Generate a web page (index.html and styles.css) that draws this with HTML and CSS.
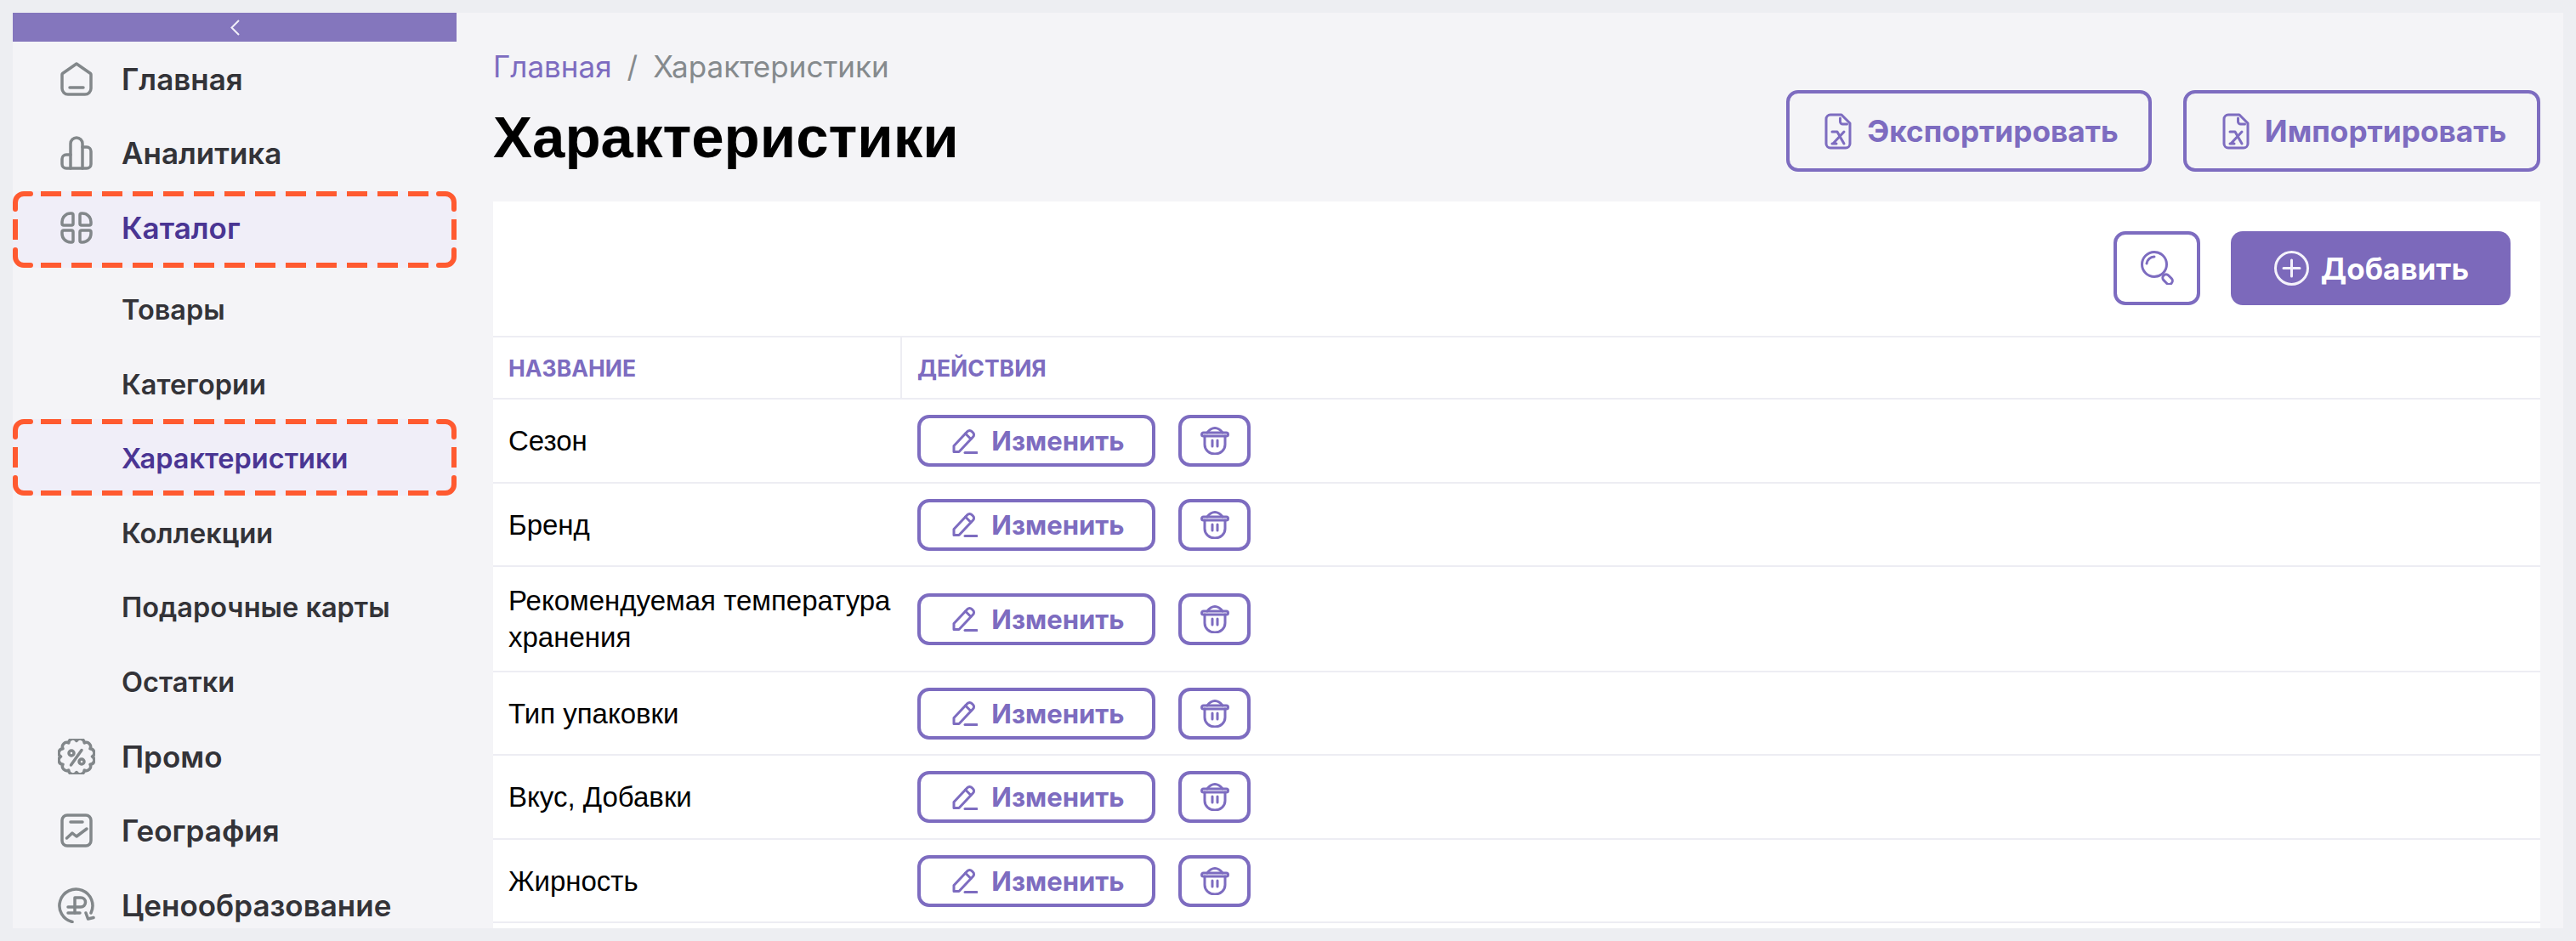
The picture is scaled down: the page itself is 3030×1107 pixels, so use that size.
FILE: index.html
```html
<!DOCTYPE html>
<html lang="ru">
<head>
<meta charset="utf-8">
<title>Характеристики</title>
<link rel="stylesheet" href="styles.css">
</head>
<body>
<svg class="defs" width="0" height="0" aria-hidden="true">
  <symbol id="i-home" viewBox="0 0 40 40"><path d="M20 2 36.500 13.500a2 2 0 0 1 .5 1.500V31a7 7 0 0 1-7 7H10a7 7 0 0 1-7-7V15a2 2 0 0 1 .5-1.500Z"/><path d="M12 30H28"/></symbol>
  <symbol id="i-chart" viewBox="0 0 40 40"><path d="M13 38H8a5 5 0 0 1-5-5V27a5 5 0 0 1 5-5h5"/><path d="M13 38V9a7 7 0 0 1 14 0V38Z"/><path d="M27 13h5a5 5 0 0 1 5 5V33a5 5 0 0 1-5 5h-5"/></symbol>
  <symbol id="i-grid" viewBox="0 0 40 40"><path d="M16 5V15a2 2 0 0 1-2 2H5a2 2 0 0 1-2-2V13A10 10 0 0 1 13 3h1a2 2 0 0 1 2 2Z"/><path d="M24 5V15a2 2 0 0 0 2 2H35a2 2 0 0 0 2-2V13A10 10 0 0 0 27 3H26a2 2 0 0 0-2 2Z"/><path d="M16 35V25a2 2 0 0 0-2-2H5a2 2 0 0 0-2 2V27A10 10 0 0 0 13 37h1a2 2 0 0 0 2-2Z"/><path d="M24 35V25a2 2 0 0 1 2-2H35a2 2 0 0 1 2 2V27A10 10 0 0 1 27 37H26a2 2 0 0 1-2-2Z"/></symbol>
  <symbol id="i-promo" viewBox="0 0 44 42"><path d="M40.500 21A5 5 0 0 1 38 30.250A5 5 0 0 1 31.250 37A5 5 0 0 1 22 39.500A5 5 0 0 1 12.750 37A5 5 0 0 1 6 30.250A5 5 0 0 1 3.500 21A5 5 0 0 1 6 11.750A5 5 0 0 1 12.750 5A5 5 0 0 1 22 2.500A5 5 0 0 1 31.250 5A5 5 0 0 1 38 11.750A5 5 0 0 1 40.500 21Z"/><path d="M28 13.500 15.500 31"/><circle cx="16" cy="17" r="3"/><circle cx="28" cy="27" r="3"/></symbol>
  <symbol id="i-geo" viewBox="0 0 40 40"><rect x="3" y="2" width="34" height="36" rx="6"/><path d="M13 10H27"/><path d="M8.500 29 15 23l5 4 12-9"/></symbol>
  <symbol id="i-rub" viewBox="0 0 44 42"><path d="M17 40.500A19.500 19.500 0 1 1 39 30"/><path d="M33 30l2.500 7 6.500-1.500"/><path d="M20 30V12h7a5.500 5.500 0 0 1 0 11H12"/><path d="M12 30H26"/></symbol>
  <symbol id="i-file" viewBox="0 0 32 43"><path d="M7 2H20L30 12V36a5 5 0 0 1-5 5H7a5 5 0 0 1-5-5V7A5 5 0 0 1 7 2Z"/><path d="M18.500 6v4a3 3 0 0 0 3 3h5"/><path d="M9 22H15L23 36M23 22 L10 36M9 36H14"/></symbol>
  <symbol id="i-search" viewBox="0 0 41 40"><circle cx="17" cy="16" r="14.500"/><path d="M8 15A9 9 0 0 1 17 7"/><rect x="-4" y="0" width="8" height="13" rx="4" transform="translate(28 29) rotate(-45)"/></symbol>
  <symbol id="i-plus" viewBox="0 0 41 41"><circle cx="20.500" cy="20.500" r="19"/><path d="M20.500 11V30M11 20.500H30"/></symbol>
  <symbol id="i-pen" viewBox="0 0 30 30"><path d="M2 20.500 18 3.500a3.500 3.500 0 0 1 5 0l1.500 1.500a3.500 3.500 0 0 1 0 5L8 27.500H2Z"/><path d="M15.500 6 22 12.500"/><path d="M15 28.500H29"/></symbol>
  <symbol id="i-trash" viewBox="0 0 34 33"><path d="M1.500 9a2 2 0 0 1 2-2h27a2 2 0 0 1 0 4H3.500a2 2 0 0 1-2-2Z"/><path d="M8 7c2-3 6-5.500 9-5.500S24 4 26 7"/><path d="M5 11V21a12 11 0 0 0 24 0V11"/><path d="M14 16v7M20 16v7"/></symbol>
  <symbol id="mark" viewBox="0 0 522 90">
    <rect class="mark-bg" x="0" y="0" width="522" height="90" rx="12"/>
    <path d="M3 21V13A10 10 0 0 1 13 3H21M501 3H509A10 10 0 0 1 519 13V21M519 69V77A10 10 0 0 1 509 87H501M21 87H13A10 10 0 0 1 3 77V69"/>
    <path class="dash" d="M33 3H489M33 87H489M3 33V57M519 33V57"/>
  </symbol>
</svg>

<div class="frame">
  <aside class="side">
    <button class="collapse" type="button" aria-label="Свернуть">
      <svg width="11" height="19" viewBox="0 0 11 19"><path d="M10 1 1.500 9.500 10 18"/></svg>
    </button>
    <nav class="nav">
      <a class="item"><svg class="ico"><use href="#i-home"/></svg>Главная</a>
      <a class="item"><svg class="ico"><use href="#i-chart"/></svg>Аналитика</a>
      <a class="item active"><svg class="ico"><use href="#i-grid"/></svg>Каталог<svg class="mark"><use href="#mark"/></svg></a>
      <div class="sub">
        <a class="item">Товары</a>
        <a class="item">Категории</a>
        <a class="item active">Характеристики<svg class="mark"><use href="#mark"/></svg></a>
        <a class="item">Коллекции</a>
        <a class="item">Подарочные карты</a>
        <a class="item">Остатки</a>
      </div>
      <a class="item"><svg class="ico wide"><use href="#i-promo"/></svg>Промо</a>
      <a class="item"><svg class="ico"><use href="#i-geo"/></svg>География</a>
      <a class="item"><svg class="ico wide"><use href="#i-rub"/></svg>Ценообразование</a>
    </nav>
  </aside>

  <main class="main">
    <div class="crumbs"><a class="crumb-link">Главная</a><span class="crumb-sep">/</span><span>Характеристики</span></div>
    <header class="head">
      <h1 class="title">Характеристики</h1>
      <div class="head-actions">
        <button class="btn btn-lg" type="button"><svg class="file"><use href="#i-file"/></svg>Экспортировать</button>
        <button class="btn btn-lg" type="button"><svg class="file"><use href="#i-file"/></svg>Импортировать</button>
      </div>
    </header>
    <section class="card">
      <div class="toolbar">
        <button class="btn btn-search" type="button" aria-label="Поиск"><svg class="search"><use href="#i-search"/></svg></button>
        <button class="btn btn-add" type="button"><svg class="plus"><use href="#i-plus"/></svg>Добавить</button>
      </div>
      <table class="table">
        <colgroup><col class="col-name"><col></colgroup>
        <thead><tr><th>Название</th><th>Действия</th></tr></thead>
        <tbody>
          <tr><td>Сезон</td><td><div class="acts"><button class="btn btn-edit" type="button"><svg class="pen"><use href="#i-pen"/></svg>Изменить</button><button class="btn btn-del" type="button" aria-label="Удалить"><svg class="trash"><use href="#i-trash"/></svg></button></div></td></tr>
          <tr><td>Бренд</td><td><div class="acts"><button class="btn btn-edit" type="button"><svg class="pen"><use href="#i-pen"/></svg>Изменить</button><button class="btn btn-del" type="button" aria-label="Удалить"><svg class="trash"><use href="#i-trash"/></svg></button></div></td></tr>
          <tr><td>Рекомендуемая температура хранения</td><td><div class="acts"><button class="btn btn-edit" type="button"><svg class="pen"><use href="#i-pen"/></svg>Изменить</button><button class="btn btn-del" type="button" aria-label="Удалить"><svg class="trash"><use href="#i-trash"/></svg></button></div></td></tr>
          <tr><td>Тип упаковки</td><td><div class="acts"><button class="btn btn-edit" type="button"><svg class="pen"><use href="#i-pen"/></svg>Изменить</button><button class="btn btn-del" type="button" aria-label="Удалить"><svg class="trash"><use href="#i-trash"/></svg></button></div></td></tr>
          <tr><td>Вкус, Добавки</td><td><div class="acts"><button class="btn btn-edit" type="button"><svg class="pen"><use href="#i-pen"/></svg>Изменить</button><button class="btn btn-del" type="button" aria-label="Удалить"><svg class="trash"><use href="#i-trash"/></svg></button></div></td></tr>
          <tr><td>Жирность</td><td><div class="acts"><button class="btn btn-edit" type="button"><svg class="pen"><use href="#i-pen"/></svg>Изменить</button><button class="btn btn-del" type="button" aria-label="Удалить"><svg class="trash"><use href="#i-trash"/></svg></button></div></td></tr>
        </tbody>
      </table>
    </section>
  </main>
</div>
</body>
</html>
```
FILE: styles.css
```css
* { box-sizing: border-box; }
html, body { height: 100%; }
body {
  margin: 0;
  padding: 15px;
  background: #edeef2;
  font-family: Inter, "Liberation Sans", sans-serif;
  color: #333338;
  overflow: hidden;
}
.defs { position: absolute; }
symbol path, symbol circle, symbol rect { fill: none; stroke-linecap: round; stroke-linejoin: round; }
symbol rect.mark-bg { fill: #f0eef8; stroke: none; }

.frame {
  display: flex;
  height: 100%;
  background: #f4f4f7;
  overflow: hidden;
}

/* sidebar */
.side { flex: 0 0 522px; display: flex; flex-direction: column; }
.collapse {
  flex: none;
  display: flex;
  align-items: center;
  justify-content: center;
  height: 34px;
  padding: 0;
  border: 0;
  background: #8476bd;
}
.collapse path { fill: none; stroke: #f1eff9; stroke-width: 2; }
.nav { flex: none; display: flex; flex-direction: column; }
.sub { display: flex; flex-direction: column; margin-top: 9.500px; }
.item {
  position: relative;
  isolation: isolate;
  flex: none;
  display: flex;
  align-items: center;
  height: 87.500px;
  padding-left: 128px;
  font-size: 35px;
  font-weight: 600;
  color: #333338;
}
.sub .item { font-size: 32.500px; }
.item.active { color: #4a3593; }
.ico {
  position: absolute;
  left: 55px;
  top: 50%;
  width: 40px;
  height: 40px;
  margin-top: -20px;
  fill: none;
  stroke: #82878a;
  stroke-width: 3.500;
}
.ico.wide { left: 53px; width: 44px; height: 42px; margin-top: -21px; }
.mark {
  position: absolute;
  z-index: -1;
  left: 0;
  top: 1px;
  width: 522px;
  height: 90px;
  fill: none;
  stroke: #ff5a30;
  stroke-width: 6;
  overflow: visible;
}
.sub .mark { top: -3px; }
.dash { stroke-dasharray: 24 12; stroke-linecap: butt; }

/* main */
.main { flex: 1; min-width: 0; padding: 43px 27px 0 43px; display: flex; flex-direction: column; }
.crumbs { display: flex; align-items: center; height: 40px; font-size: 35px; color: #858a8d; }
.crumb-link { color: #7d6cc0; }
.crumb-sep { margin: 0 18px; }
.head { display: flex; justify-content: space-between; margin-top: 8px; }
.title {
  margin: 16px 0 0 0;
  font-family: "Liberation Sans", Arial, sans-serif;
  font-size: 69px;
  line-height: 80px;
  font-weight: 700;
  color: #000;
}
.head-actions { display: flex; gap: 37px; }

.btn {
  display: inline-flex;
  align-items: center;
  justify-content: center;
  padding: 0;
  border: 4px solid #7d6cc0;
  border-radius: 14px;
  background: transparent;
  font-family: Inter, "Liberation Sans", sans-serif;
  font-weight: 700;
  color: #7d6cc0;
}
.btn svg { fill: none; stroke: #7d6cc0; stroke-width: 3; }
.btn-lg { width: 430px; height: 96px; gap: 18px; padding-left: 6px; font-size: 35.200px; }
.btn-lg + .btn-lg { width: 420px; }
.file { width: 32px; height: 43px; }

.card { flex: 1; margin-top: 35px; background: #fff; }
.toolbar { display: flex; justify-content: flex-end; gap: 36px; height: 158px; padding: 35px 35px 0 0; }
.btn-search { width: 102px; height: 87px; }
.search { width: 41px; height: 40px; margin-top: -1px; }
.btn-add {
  width: 329px;
  height: 87px;
  gap: 14px;
  padding-left: 2px;
  border: 0;
  background: #7c69bb;
  color: #fff;
  font-size: 35px;
}
.btn-add .plus { width: 41px; height: 41px; stroke: #f4f2fb; }

.table { width: 100%; table-layout: fixed; border-collapse: collapse; }
.col-name { width: 480px; }
.table th {
  height: 73px;
  padding: 0 0 0 18px;
  border-top: 2px solid #ededf3;
  border-bottom: 2px solid #ededf3;
  font-size: 26.500px;
  font-weight: 700;
  text-align: left;
  text-transform: uppercase;
  color: #7d6cc0;
}
.table th:first-child { border-right: 2px solid #ededf3; }
.table td {
  padding: 18px 10px 17.500px 18px;
  border-bottom: 2px solid #ededf3;
  font-family: "Liberation Sans", Arial, sans-serif;
  font-size: 33px;
  line-height: 43px;
  color: #000;
}
.acts { display: flex; gap: 27px; margin-left: 1px; }
.btn-edit { width: 280px; height: 61px; gap: 16px; padding-left: 5px; font-size: 31px; }
.btn-del { width: 85px; height: 61px; }
.pen { width: 30px; height: 30px; stroke-width: 2.500; }
.trash { width: 34px; height: 33px; stroke-width: 2; }
```
